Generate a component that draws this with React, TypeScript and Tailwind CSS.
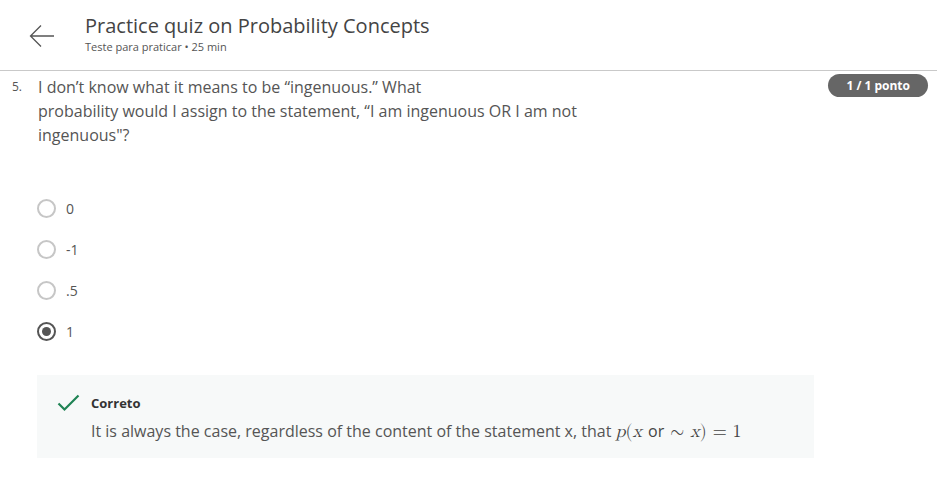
import React from 'react';

const options = ['0', '-1', '.5', '1'];
const selected = '1';

function Radio({ checked }: { checked: boolean }) {
  return (
    <span
      className={`flex h-[19px] w-[19px] items-center justify-center rounded-full border-2 ${
        checked ? 'border-[#555]' : 'border-[#c6c6c6]'
      }`}
    >
      {checked && <span className="h-[9px] w-[9px] rounded-full bg-[#555]" />}
    </span>
  );
}

export default function App() {
  return (
    <div className="h-[480px] w-[937px] bg-white text-[#555] [font-family:'Open_Sans',sans-serif]">
      {/* Header */}
      <div className="flex h-[71px] items-start border-b border-[#c9c9c9]">
        <svg className="ml-[29px] mt-[24px]" width="26" height="24" viewBox="0 0 26 24" fill="none">
          <path d="M25 12H2M12 1.5L1.5 12L12 22.5" stroke="#555" strokeWidth="1.3" />
        </svg>
        <div className="ml-[30px] mt-[12px]">
          <div className="text-[20px] leading-[28px] text-[#444]">Practice quiz on Probability Concepts</div>
          <div className="mt-[-1px] text-[11px] leading-[16px] text-[#555]">Teste para praticar • 25 min</div>
        </div>
      </div>

      {/* Question */}
      <div className="flex items-start pt-[4px]">
        <div className="w-[38px] pl-[12px] pt-[3px] text-[12px] leading-[18px]">5.</div>
        <div className="w-[590px] text-[16px] leading-[24px] text-[#555]">
          I don’t know what it means to be “ingenuous.” What
          <br />
          probability would I assign to the statement, “I am ingenuous OR I am not
          <br />
          ingenuous"?
        </div>
        <div className="ml-auto mr-[9px] mt-[-1px] rounded-full bg-[#666] px-[18px] text-[12px] font-bold leading-[23px] text-white">
          1 / 1 ponto
        </div>
      </div>

      {/* Options */}
      <div className="ml-[37px] mt-[52px] flex flex-col gap-[22px]">
        {options.map((o) => (
          <div key={o} className="flex h-[19px] items-center gap-[10px]">
            <Radio checked={o === selected} />
            <span className="text-[14px] leading-[19px] text-[#555]">{o}</span>
          </div>
        ))}
      </div>

      {/* Feedback */}
      <div className="ml-[37px] mt-[34px] flex h-[83px] w-[777px] items-start bg-[#f7f9f9] pt-[18px]">
        <svg className="ml-[20px] mt-[1px]" width="23" height="18" viewBox="0 0 23 18" fill="none">
          <path d="M1.5 9.5L7.5 15.5L21.5 1.5" stroke="#1f8354" strokeWidth="2.2" />
        </svg>
        <div className="ml-[11px]">
          <div className="text-[13px] font-bold leading-[20px] text-[#333]">Correto</div>
          <div className="mt-[6px] text-[16px] leading-[24px] text-[#555]">
            It is always the case, regardless of the content of the statement x, that{' '}
            <span className="text-[18px] [font-family:'Latin_Modern_Math','DejaVu_Serif','Liberation_Serif',serif] text-[#444]">
              <i>p</i>(<i>x</i> <span className="text-[16px] [font-family:'Open_Sans',sans-serif]">or</span> ∼{' '}
              <i>x</i>) = 1
            </span>
          </div>
        </div>
      </div>
    </div>
  );
}
